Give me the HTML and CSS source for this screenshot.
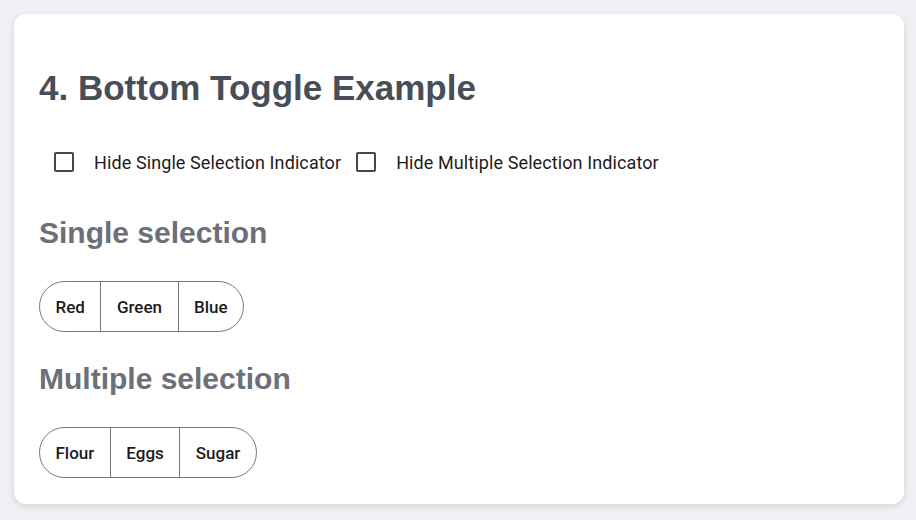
FILE: index.html
```html
<!DOCTYPE html>
<html>
<head>
<meta charset="utf-8">
<link rel="stylesheet" href="styles.css">
</head>
<body>
<div class="card">
  <h2 class="title">4. Bottom Toggle Example</h2>
  <div class="options">
    <label class="check"><span class="box"></span><span class="check-label">Hide Single Selection Indicator</span></label>
    <label class="check"><span class="box"></span><span class="check-label">Hide Multiple Selection Indicator</span></label>
  </div>
  <h3 class="sub">Single selection</h3>
  <div class="toggle-group">
    <button class="toggle">Red</button>
    <button class="toggle">Green</button>
    <button class="toggle">Blue</button>
  </div>
  <h3 class="sub">Multiple selection</h3>
  <div class="toggle-group last">
    <button class="toggle">Flour</button>
    <button class="toggle">Eggs</button>
    <button class="toggle">Sugar</button>
  </div>
</div>
</body>
</html>
```
FILE: styles.css
```css
html, body {
  margin: 0;
  padding: 0;
}
body {
  background: #eff0f4;
  padding: 14px;
  font-family: "Liberation Sans", Arial, sans-serif;
}
.card {
  box-sizing: border-box;
  width: 890px;
  height: 490px;
  background: #ffffff;
  border-radius: 12px;
  box-shadow: 0 2px 6px rgba(0, 0, 0, 0.12);
  padding: 54px 25px 26px 25px;
}
.title {
  margin: 0;
  font-size: 35px;
  line-height: 40px;
  font-weight: 700;
  color: #484e57;
}
.options {
  display: flex;
  align-items: center;
  height: 40px;
  margin-top: 34px;
  padding-bottom: 4px;
}
.check {
  display: flex;
  align-items: center;
  font-family: Roboto, "Liberation Sans", sans-serif;
  font-size: 18px;
  letter-spacing: 0.1px;
  color: #1d1b20;
}
.box {
  box-sizing: border-box;
  width: 20px;
  height: 20px;
  border: 2px solid #49454f;
  border-radius: 2px;
  margin-left: 15px;
  margin-right: 20px;
}
.sub {
  margin: 30px 0 31px 0;
  font-size: 30px;
  line-height: 34px;
  font-weight: 700;
  color: #6b7079;
}
.toggle-group {
  display: inline-flex;
  border: 1px solid #79747e;
  border-radius: 26px;
  overflow: hidden;
  height: 51px;
  box-sizing: border-box;
}
.toggle {
  border: none;
  background: transparent;
  padding: 0 15.5px;
  font-family: Roboto, "Liberation Sans", sans-serif;
  font-size: 17px;
  font-weight: 500;
  color: #1d1b20;
}
.toggle + .toggle {
  border-left: 1px solid #79747e;
}
```
